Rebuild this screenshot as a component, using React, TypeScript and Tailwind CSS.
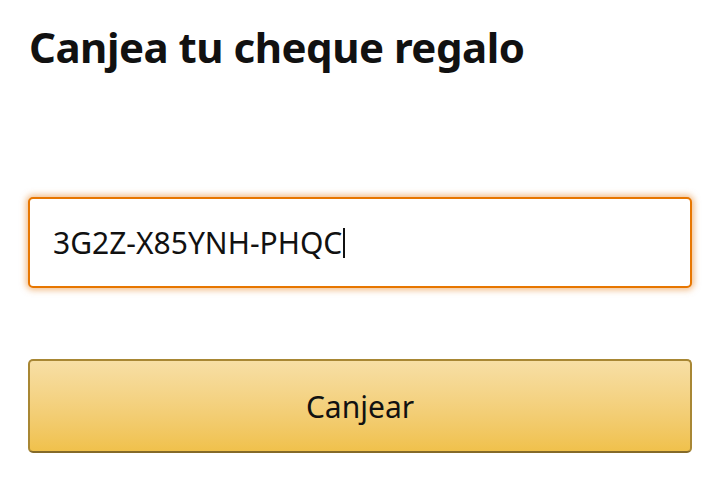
import React, { useState } from 'react';

export default function App() {
  const [code, setCode] = useState('3G2Z-X85YNH-PHQC');

  return (
    <main className="min-h-screen w-full bg-white px-[28px] pt-[20px] font-['Noto_Sans',sans-serif] text-[#111]">
      <h1 className="text-[42px] font-bold leading-[54px] tracking-[-0.5px] pl-[1px]">Canjea tu cheque regalo</h1>

      <form onSubmit={(e) => e.preventDefault()} className="mt-[123px] flex flex-col gap-[71px]">
        <div className="relative">
          <input
            value={code}
            onChange={(e) => setCode(e.target.value)}
            className="h-[91px] w-full rounded-[5px] border-2 border-[#e77600] bg-white px-[23px] text-[30px] text-[#111] caret-transparent shadow-[0_0_6px_2px_rgba(228,121,17,0.5)] outline-none"
          />
          <div className="pointer-events-none absolute inset-y-0 left-[25px] flex items-center text-[30px]">
            <span className="invisible whitespace-pre">{code}</span>
            <span className="ml-[1px] h-[30px] w-[2px] bg-[#111]" />
          </div>
        </div>

        <button
          type="submit"
          className="h-[94px] w-full rounded-[5px] border-2 border-[#a88734] border-b-[#846a29] bg-gradient-to-b from-[#f7dfa5] to-[#f0c14b] text-[30px] text-[#111]"
        >
          Canjear
        </button>
      </form>
    </main>
  );
}
